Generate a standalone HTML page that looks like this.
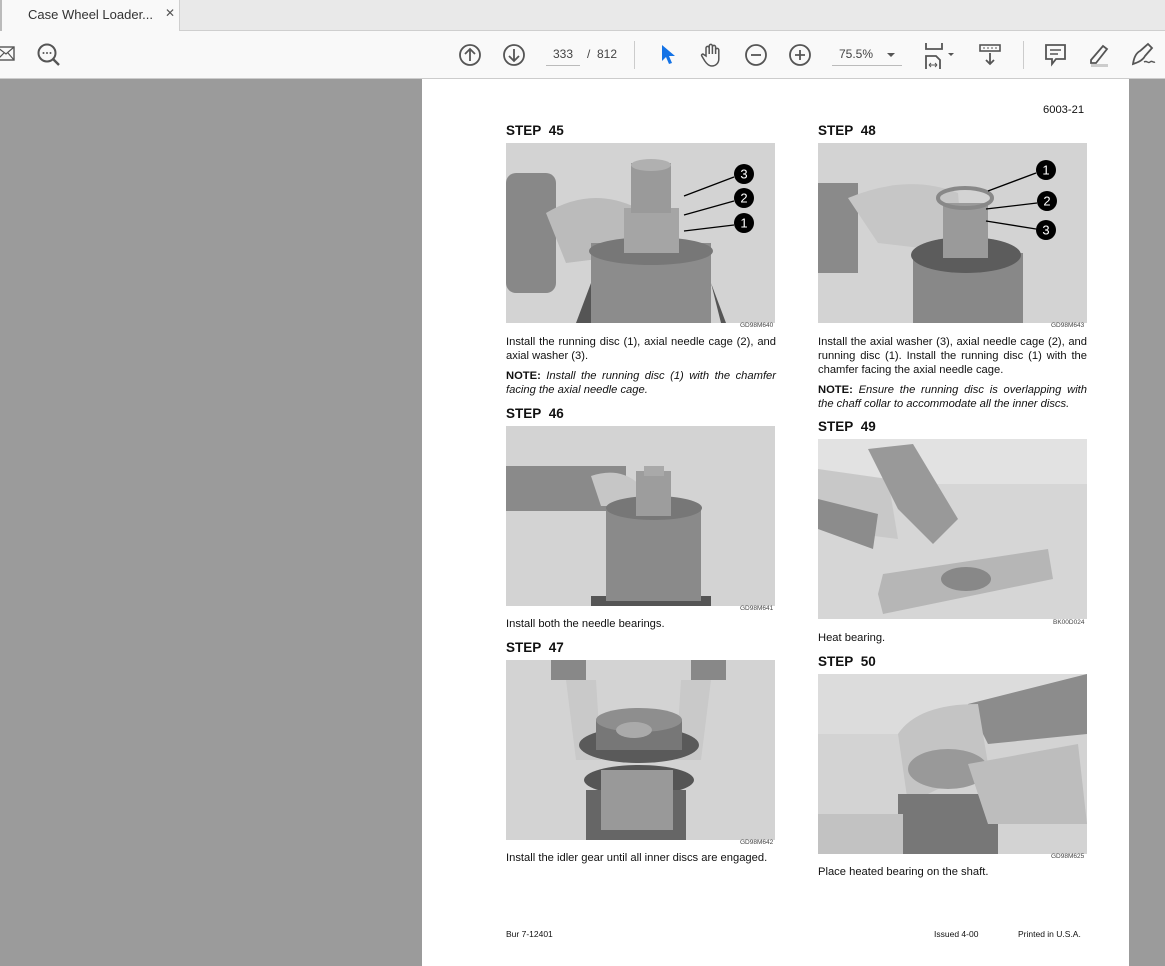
<!DOCTYPE html>
<html><head><meta charset="utf-8"><style>
*{margin:0;padding:0;box-sizing:border-box}
body{width:1165px;height:966px;overflow:hidden;background:#9b9b9b;font-family:"Liberation Sans",Arial,sans-serif;position:relative}
.tabbar{position:absolute;left:0;top:0;width:1165px;height:31px;background:#e9e9e9;border-bottom:1px solid #cfcfcf}
.tab{position:absolute;left:0;top:0;width:180px;height:32px;background:#f9f9f9;border-right:1px solid #cfcfcf;border-left:2px solid #bbb;font-size:13px;color:#333;padding:7px 0 0 26px}
.tab span{position:absolute;left:163px;top:6px;font-size:12px;color:#555}
.toolbar{position:absolute;left:0;top:31px;width:1165px;height:48px;background:#f9f9f9;border-bottom:1px solid #ccc}
.ic{position:absolute}
.page{position:absolute;left:422px;top:79px;width:707px;height:887px;background:#fff}
.t{position:absolute;font-size:11.2px;color:#111;line-height:14px}
.h{position:absolute;font-size:13.5px;font-weight:bold;color:#111}
.j{text-align:justify;text-align-last:left}
.c{position:absolute;font-size:6.5px;color:#444}
.ph{position:absolute;width:269px;height:180px;background:#d3d3d3;overflow:hidden}
</style></head><body>
<div class="tabbar"><div class="tab">Case Wheel Loader...<span>✕</span></div></div>
<div class="toolbar">
<svg class="ic" style="left:0;top:14px" width="16" height="18"><rect x="-3" y="2" width="17" height="13" fill="none" stroke="#555" stroke-width="1.4"/><path d="M-3 2 L6 9 L14 2 M-3 15 L4 8 M14 15 L8 8" stroke="#555" fill="none" stroke-width="1.2"/></svg>
<svg class="ic" style="left:36px;top:11px" width="26" height="26"><circle cx="11" cy="11" r="8.5" fill="none" stroke="#555" stroke-width="2"/><path d="M17 17 L23 23" stroke="#555" stroke-width="2.4"/><circle cx="7.5" cy="11" r="1" fill="#555"/><circle cx="11" cy="11" r="1" fill="#555"/><circle cx="14.5" cy="11" r="1" fill="#555"/></svg>
<svg class="ic" style="left:458px;top:12px" width="24" height="24"><circle cx="12" cy="12" r="10" fill="none" stroke="#555" stroke-width="1.8"/><path d="M12 18V6M7 11l5-5 5 5" fill="none" stroke="#555" stroke-width="1.8"/></svg>
<svg class="ic" style="left:502px;top:12px" width="24" height="24"><circle cx="12" cy="12" r="10" fill="none" stroke="#555" stroke-width="1.8"/><path d="M12 6v12M7 13l5 5 5-5" fill="none" stroke="#555" stroke-width="1.8"/></svg>
<div class="ic" style="left:546px;top:16px;width:34px;font-size:12px;color:#444;text-align:center;border-bottom:1px solid #bbb;padding-bottom:4px">333</div>
<div class="ic" style="left:587px;top:16px;font-size:12px;color:#444">/&nbsp; 812</div>
<div class="ic" style="left:634px;top:10px;width:1px;height:28px;background:#ccc"></div>
<svg class="ic" style="left:660px;top:13px" width="18" height="22"><path d="M2 1 L2 17 L6 13 L9 20 L12 19 L9 12 L15 12 Z" fill="#1473e6"/></svg>
<svg class="ic" style="left:700px;top:11px" width="24" height="26"><path d="M6 14 V6 a1.6 1.6 0 0 1 3.2 0 V12 V4 a1.6 1.6 0 0 1 3.2 0 V12 V5 a1.6 1.6 0 0 1 3.2 0 V12 V8 a1.6 1.6 0 0 1 3.2 0 V17 c0 4 -3 7 -7 7 c-3 0 -5 -2 -7 -5 l-3 -5 c-.8 -1.4 1 -2.6 2 -1.4 z" fill="none" stroke="#555" stroke-width="1.5"/></svg>
<svg class="ic" style="left:744px;top:12px" width="24" height="24"><circle cx="12" cy="12" r="10" fill="none" stroke="#555" stroke-width="1.8"/><path d="M7 12h10" stroke="#555" stroke-width="1.8"/></svg>
<svg class="ic" style="left:788px;top:12px" width="24" height="24"><circle cx="12" cy="12" r="10" fill="none" stroke="#555" stroke-width="1.8"/><path d="M7 12h10M12 7v10" stroke="#555" stroke-width="1.8"/></svg>
<div class="ic" style="left:832px;top:16px;width:70px;font-size:12px;color:#444;border-bottom:1px solid #bbb;padding:0 0 4px 7px">75.5%</div>
<div class="ic" style="left:887px;top:22px;border:4px solid transparent;border-top:4px solid #555"></div>
<svg class="ic" style="left:924px;top:11px" width="36" height="28"><path d="M2 1v6h16V1M2 27V14h10l4 4v9" fill="none" stroke="#555" stroke-width="1.8"/><path d="M5 23h8M5 23l2-2M5 23l2 2M13 23l-2-2M13 23l-2 2" stroke="#555" stroke-width="1"/><path d="M24 11l3 3 3-3z" fill="#555"/></svg>
<svg class="ic" style="left:978px;top:12px" width="26" height="24"><rect x="2" y="2" width="20" height="6" fill="none" stroke="#555" stroke-width="1.6"/><path d="M5 5h2M9 5h2M13 5h2M17 5h2" stroke="#555"/><path d="M12 10v11M8 17l4 4 4-4" fill="none" stroke="#555" stroke-width="1.8"/></svg>
<div class="ic" style="left:1023px;top:10px;width:1px;height:28px;background:#ccc"></div>
<svg class="ic" style="left:1044px;top:12px" width="24" height="24"><path d="M2 2h19v14h-9l-4 5v-5H2z" fill="none" stroke="#555" stroke-width="1.8"/><path d="M6 7h11M6 11h8" stroke="#555" stroke-width="1.4"/></svg>
<svg class="ic" style="left:1086px;top:11px" width="26" height="26"><path d="M5 18 L17 4 l4 3 L10 21 H5z" fill="none" stroke="#555" stroke-width="1.8"/><rect x="5" y="22" width="17" height="3" fill="#ccc"/></svg>
<svg class="ic" style="left:1130px;top:11px" width="30" height="26"><path d="M3 22 C4 15 6 11 10 9 L18 2 l4 4 -7 8 c-2 4 -6 6 -12 8z" fill="none" stroke="#555" stroke-width="1.8"/><path d="M14 20c3-2 4 2 6 0s3 1 5 0" fill="none" stroke="#555" stroke-width="1.4"/></svg>
</div>
<div class="page"></div>

<div class="t" style="left:1043px;top:103px">6003-21</div>

<div class="h" style="left:506px;top:123px">STEP&nbsp; 45</div>
<div class="ph" style="left:506px;top:143px"><svg width="269" height="180"><rect x="0" y="30" width="50" height="120" fill="#888" rx="10"/><path d="M40 70 Q90 40 140 70 L140 110 L60 120Z" fill="#bbb"/><rect x="85" y="100" width="120" height="80" fill="#8c8c8c"/><ellipse cx="145" cy="108" rx="62" ry="14" fill="#777"/><rect x="118" y="65" width="55" height="45" fill="#a5a5a5"/><rect x="125" y="20" width="40" height="50" fill="#9a9a9a"/><ellipse cx="145" cy="22" rx="20" ry="6" fill="#b0b0b0"/><path d="M70 180 L85 140 L85 180Z M215 180 L205 140 L220 180Z" fill="#555"/>
<circle cx="238" cy="31" r="10" fill="#000"/><circle cx="238" cy="55" r="10" fill="#000"/><circle cx="238" cy="80" r="10" fill="#000"/>
<text x="238" y="35.5" fill="#fff" font-size="13" font-family="Liberation Sans" text-anchor="middle">3</text><text x="238" y="59.5" fill="#fff" font-size="13" font-family="Liberation Sans" text-anchor="middle">2</text><text x="238" y="84.5" fill="#fff" font-size="13" font-family="Liberation Sans" text-anchor="middle">1</text>
<path d="M228 34 L178 53 M228 58 L178 72 M228 82 L178 88" stroke="#000" stroke-width="1.3"/></svg></div>
<div class="c" style="left:740px;top:322px">GD98M640</div>
<div class="t j" style="left:506px;top:335px;width:270px">Install the running disc (1), axial needle cage (2), and axial washer (3).</div>
<div class="t j" style="left:506px;top:369px;width:270px"><b>NOTE:</b> <i>Install the running disc (1) with the chamfer facing the axial needle cage.</i></div>

<div class="h" style="left:506px;top:406px">STEP&nbsp; 46</div>
<div class="ph" style="left:506px;top:426px"><svg width="269" height="180"><rect x="0" y="40" width="120" height="45" fill="#8a8a8a"/><path d="M85 50 Q115 40 135 60 L130 80 L95 80Z" fill="#c6c6c6"/><rect x="85" y="170" width="120" height="10" fill="#555"/><rect x="100" y="80" width="95" height="95" fill="#8a8a8a"/><ellipse cx="148" cy="82" rx="48" ry="12" fill="#777"/><rect x="130" y="45" width="35" height="45" fill="#9d9d9d"/><rect x="138" y="40" width="20" height="10" fill="#a9a9a9"/></svg></div>
<div class="c" style="left:740px;top:605px">GD98M641</div>
<div class="t" style="left:506px;top:617px">Install both the needle bearings.</div>

<div class="h" style="left:506px;top:640px">STEP&nbsp; 47</div>
<div class="ph" style="left:506px;top:660px"><svg width="269" height="180"><rect x="45" y="0" width="35" height="20" fill="#888"/><rect x="185" y="0" width="35" height="20" fill="#888"/><path d="M60 20 L90 20 L95 100 L70 100Z M175 20 L205 20 L195 100 L170 100Z" fill="#c9c9c9"/><ellipse cx="133" cy="120" rx="55" ry="15" fill="#555"/><rect x="80" y="130" width="100" height="50" fill="#666"/><rect x="95" y="110" width="72" height="60" fill="#999"/><ellipse cx="133" cy="85" rx="60" ry="18" fill="#5a5a5a"/><rect x="90" y="60" width="86" height="30" fill="#777"/><ellipse cx="133" cy="60" rx="43" ry="12" fill="#8e8e8e"/><ellipse cx="128" cy="70" rx="18" ry="8" fill="#aaa"/></svg></div>
<div class="c" style="left:740px;top:839px">GD98M642</div>
<div class="t" style="left:506px;top:851px">Install the idler gear until all inner discs are engaged.</div>

<div class="h" style="left:818px;top:123px">STEP&nbsp; 48</div>
<div class="ph" style="left:818px;top:143px"><svg width="269" height="180"><rect x="0" y="40" width="40" height="90" fill="#8a8a8a"/><path d="M30 55 Q90 30 140 50 L145 110 L60 100Z" fill="#c6c6c6"/><rect x="95" y="110" width="110" height="70" fill="#888"/><ellipse cx="148" cy="112" rx="55" ry="18" fill="#5c5c5c"/><rect x="125" y="60" width="45" height="55" fill="#9a9a9a"/><ellipse cx="147" cy="55" rx="27" ry="10" fill="none" stroke="#888" stroke-width="4"/>
<circle cx="228" cy="27" r="10" fill="#000"/><circle cx="229" cy="58" r="10" fill="#000"/><circle cx="228" cy="87" r="10" fill="#000"/>
<text x="228" y="31.5" fill="#fff" font-size="13" font-family="Liberation Sans" text-anchor="middle">1</text><text x="229" y="62.5" fill="#fff" font-size="13" font-family="Liberation Sans" text-anchor="middle">2</text><text x="228" y="91.5" fill="#fff" font-size="13" font-family="Liberation Sans" text-anchor="middle">3</text>
<path d="M218 30 L170 48 M219 60 L168 66 M218 86 L168 78" stroke="#000" stroke-width="1.3"/></svg></div>
<div class="c" style="left:1051px;top:322px">GD98M643</div>
<div class="t j" style="left:818px;top:335px;width:269px">Install the axial washer (3), axial needle cage (2), and running disc (1). Install the running disc (1) with the chamfer facing the axial needle cage.</div>
<div class="t j" style="left:818px;top:383px;width:269px"><b>NOTE:</b> <i>Ensure the running disc is overlapping with the chaff collar to accommodate all the inner discs.</i></div>

<div class="h" style="left:818px;top:419px">STEP&nbsp; 49</div>
<div class="ph" style="left:818px;top:439px;background:#d6d6d6"><svg width="269" height="180"><rect x="0" y="0" width="269" height="45" fill="#e2e2e2"/><path d="M60 155 L65 135 L230 110 L235 140 L65 175Z" fill="#b6b6b6"/><path d="M0 30 L70 40 L80 100 L0 90Z" fill="#c8c8c8"/><path d="M50 10 L95 5 L140 80 L115 105 L80 70Z" fill="#999"/><path d="M0 60 L60 75 L55 110 L0 90Z" fill="#8c8c8c"/><ellipse cx="148" cy="140" rx="25" ry="12" fill="#888"/></svg></div>
<div class="c" style="left:1053px;top:619px">BK00D024</div>
<div class="t" style="left:818px;top:631px">Heat bearing.</div>

<div class="h" style="left:818px;top:654px">STEP&nbsp; 50</div>
<div class="ph" style="left:818px;top:674px"><svg width="269" height="180"><rect x="0" y="0" width="269" height="60" fill="#dcdcdc"/><path d="M150 30 L269 0 L269 60 L170 70Z" fill="#8c8c8c"/><path d="M80 60 Q100 30 160 30 L170 90 L90 130Z" fill="#c4c4c4"/><rect x="80" y="120" width="100" height="60" fill="#777"/><ellipse cx="130" cy="95" rx="40" ry="20" fill="#999"/><path d="M150 90 L260 70 L269 150 L170 150Z" fill="#bdbdbd"/><rect x="0" y="140" width="85" height="40" fill="#c2c2c2"/></svg></div>
<div class="c" style="left:1051px;top:853px">GD98M625</div>
<div class="t" style="left:818px;top:865px">Place heated bearing on the shaft.</div>

<div class="t" style="left:506px;top:927px;font-size:8.5px">Bur 7-12401</div>
<div class="t" style="left:934px;top:927px;font-size:8.5px">Issued 4-00</div>
<div class="t" style="left:1018px;top:927px;font-size:8.5px">Printed in U.S.A.</div>
</body></html>
